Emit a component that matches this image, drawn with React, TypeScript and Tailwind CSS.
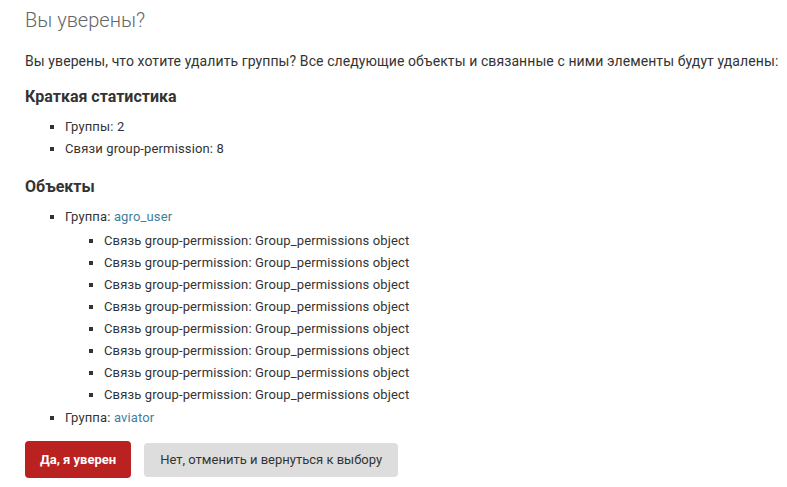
import React from "react";

const font = { fontFamily: "Roboto, 'Liberation Sans', sans-serif" };

export default function App() {
  const nested = Array.from({ length: 8 });
  return (
    <div className="w-[787px] h-[487px] bg-white text-[#333] overflow-hidden" style={font}>
      <div className="pl-[25px] pt-[8px]">
        <h1 className="text-[20px] leading-[24px] font-light text-[#666]">Вы уверены?</h1>
        <p className="mt-[19px] text-[14px] leading-[20px] tracking-[0.09px] text-[#333]">
          Вы уверены, что хотите удалить группы? Все следующие объекты и связанные с ними элементы будут удалены:
        </p>
        <h2 className="mt-[16px] text-[16px] leading-[20px] font-bold text-[#333]">Краткая статистика</h2>
        <ul className="mt-[9px] pl-[40px] list-[square] text-[13px] leading-[20px] tracking-[0.14px]">
          <li className="py-[1px]">Группы: 2</li>
          <li className="py-[1px]">Связи group-permission: 8</li>
        </ul>
        <h2 className="mt-[17px] text-[16px] leading-[20px] font-bold text-[#333]">Объекты</h2>
        <ul className="mt-[9px] pl-[40px] list-[square] text-[13px] leading-[20px] tracking-[0.14px]">
          <li className="py-[1px]">
            Группа: <a className="text-[#447e9b]">agro_user</a>
            <ul className="mt-[3px] pl-[39px] list-[square]">
              {nested.map((_, i) => (
                <li key={i} className="py-[1px]">
                  Связь group-permission: Group_permissions object
                </li>
              ))}
            </ul>
          </li>
          <li className="py-[1px]">
            Группа: <a className="text-[#447e9b]">aviator</a>
          </li>
        </ul>
        <div className="mt-[12px] flex items-center gap-[13px]">
          <button className="h-[37px] px-[15px] rounded-[4px] bg-[#ba2121] text-white text-[13px] font-bold">
            Да, я уверен
          </button>
          <button className="h-[34px] px-[16px] rounded-[4px] bg-[#ddd] text-[#333] text-[13px]">
            Нет, отменить и вернуться к выбору
          </button>
        </div>
      </div>
    </div>
  );
}
